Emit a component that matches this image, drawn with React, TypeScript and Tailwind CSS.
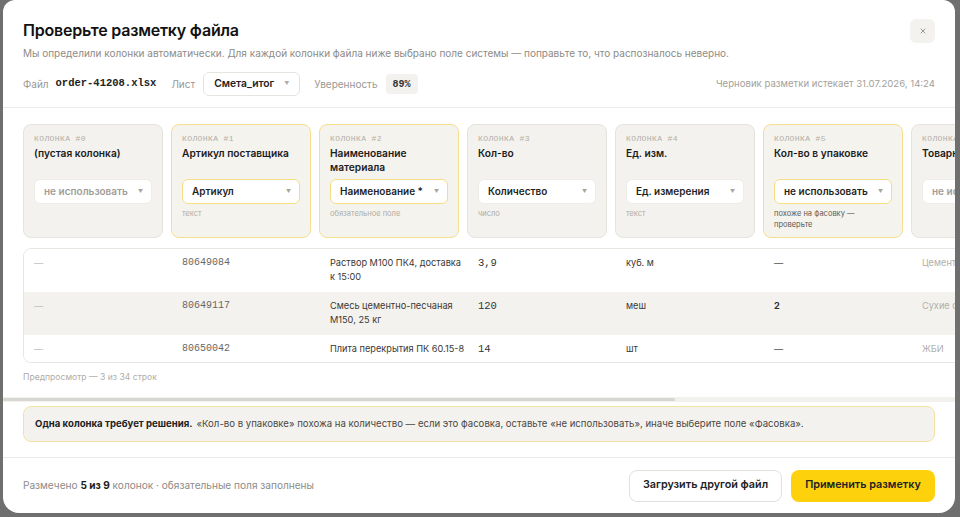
import { X } from 'lucide-react'

interface Column {
  idx: number
  name: string
  field: string
  hint?: string
  flagged?: boolean
  unused?: boolean
  warn?: boolean
}

const columns: Column[] = [
  { idx: 0, name: '(пустая колонка)', field: 'не использовать', unused: true },
  { idx: 1, name: 'Артикул поставщика', field: 'Артикул', hint: 'текст', flagged: true },
  { idx: 2, name: 'Наименование материала', field: 'Наименование *', hint: 'обязательное поле', flagged: true },
  { idx: 3, name: 'Кол-во', field: 'Количество', hint: 'число' },
  { idx: 4, name: 'Ед. изм.', field: 'Ед. измерения', hint: 'текст' },
  { idx: 5, name: 'Кол-во в упаковке', field: 'не использовать', hint: 'похоже на фасовку — проверьте', flagged: true, warn: true },
  { idx: 6, name: 'Товарная группа', field: 'не использовать', unused: true },
  { idx: 7, name: 'Цена', field: 'не использовать', unused: true },
]

const rows = [
  ['—', '80649084', 'Раствор М100 ПК4, доставка к 15:00', '3,9', 'куб. м', '—', 'Цемент и растворы', ''],
  ['—', '80649117', 'Смесь цементно-песчаная М150, 25 кг', '120', 'меш', '2', 'Сухие смеси', ''],
  ['—', '80650042', 'Плита перекрытия ПК 60.15-8', '14', 'шт', '—', 'ЖБИ', ''],
]

const sans = "font-['Inter','Noto_Sans',sans-serif]"
const mono = "font-['Liberation_Mono','DejaVu_Sans_Mono',monospace]"

function ColumnCard({ col }: { col: Column }) {
  return (
    <div
      className={`w-[140px] h-[114px] shrink-0 rounded-lg border px-2.5 pt-[9px] ${
        col.flagged ? 'border-[#f5df8c] bg-[#f5f3ee]' : 'border-[#e6e3dd] bg-[#f4f2ee]'
      }`}
    >
      <div className={`${mono} text-[8px] leading-[10px] tracking-[0.4px] text-[#b3aea6]`}>
        КОЛОНКА #{col.idx}
      </div>
      <div className="mt-[2px] h-[28px] text-[10.2px] leading-[14px] font-semibold text-[#1c1c1c]">
        {col.name}
      </div>
      <div
        className={`mt-[5px] h-[25px] rounded-md bg-white border flex items-center justify-between pl-[9px] pr-[8px] ${
          col.flagged ? 'border-[#f6dd82]' : 'border-[#efede8]'
        }`}
      >
        <span
          className={`text-[10px] font-semibold whitespace-nowrap ${
            col.unused ? 'text-[#a19d97]' : 'text-[#1f1f1f]'
          }`}
        >
          {col.field}
        </span>
        <span className="text-[5px] text-[#a8a49d]">▼</span>
      </div>
      {col.hint && (
        <div
          className={`mt-[4px] text-[7.5px] leading-[11px] ${
            col.warn ? 'text-[#5d5a55] pr-4' : 'text-[#b0aca5]'
          }`}
        >
          {col.hint}
        </div>
      )}
    </div>
  )
}

export default function App() {
  return (
    <div className={`w-[960px] h-[517px] bg-[#6f6f6f] overflow-hidden ${sans}`}>
      <div className="ml-[3px] w-[952px] h-[513px] bg-white rounded-b-2xl rounded-t-xl overflow-hidden flex flex-col">
        {/* Header */}
        <div className="px-5 pt-[19px] h-[108px] border-b border-[#ecebe7] shrink-0">
          <div className="flex items-start justify-between">
            <div>
              <h1 className="text-[16px] leading-[22px] font-semibold text-[#111] tracking-[-0.2px]">
                Проверьте разметку файла
              </h1>
              <p className="mt-[5px] text-[10px] leading-[14px] text-[#8d8b86]">
                Мы определили колонки автоматически. Для каждой колонки файла ниже выбрано поле системы — поправьте то, что распозналось неверно.
              </p>
            </div>
            <button className="w-[25px] h-[24px] rounded-md bg-[#f3f2ee] flex items-center justify-center">
              <X className="w-[8px] h-[8px] text-[#888]" strokeWidth={2.5} />
            </button>
          </div>
          <div className="mt-[12px] flex items-center justify-between">
            <div className="flex items-center text-[10px]">
              <span className="text-[#9a9893]">Файл</span>
              <span className={`${mono} ml-[7px] text-[10.5px] font-bold text-[#222]`}>order-41208.xlsx</span>
              <span className="ml-[15px] text-[#9a9893]">Лист</span>
              <div className="ml-[8px] h-[24px] px-[10px] rounded-md border border-[#e6e4df] flex items-center gap-[10px]">
                <span className="text-[10.3px] font-semibold text-[#222]">Смета_итог</span>
                <span className="text-[5px] text-[#aaa]">▼</span>
              </div>
              <span className="ml-[14px] text-[#9a9893]">Уверенность</span>
              <span className={`${mono} ml-[8px] h-[20px] px-[7px] flex items-center rounded bg-[#f3f2ee] text-[10px] font-bold text-[#333]`}>
                89%
              </span>
            </div>
            <span className="text-[9.6px] text-[#a3a19c]">Черновик разметки истекает 31.07.2026, 14:24</span>
          </div>
        </div>

        {/* Scroll area */}
        <div className="h-[294px] shrink-0 flex flex-col">
          <div className="flex-1 overflow-hidden pl-5 pt-4">
            <div className="flex gap-2">
              {columns.map((c) => (
                <ColumnCard key={c.idx} col={c} />
              ))}
            </div>
            <div className="mt-[10px] w-[1180px] rounded-lg border border-[#e8e6e1] overflow-hidden">
              {rows.map((r, i) => (
                <div
                  key={i}
                  className={`grid grid-cols-[148px_148px_148px_148px_148px_148px_148px_148px] ${
                    i === 1 ? 'bg-[#f4f2ee]' : 'bg-white'
                  } ${i === 2 ? 'h-[27px]' : 'h-[43px]'}`}
                >
                  {r.map((cell, j) => (
                    <div
                      key={j}
                      className={`pl-[10px] pr-0 pt-[7px] text-[9.2px] leading-[14px] ${
                        j === 0
                          ? 'text-[#c4c1bb]'
                          : j === 1
                          ? `${mono} text-[10px] text-[#6a6763]`
                          : j === 3
                          ? `${mono} text-[10.5px] text-[#333]`
                          : j === 5
                          ? cell === '—'
                            ? 'text-[#555]'
                            : 'font-bold text-[#333]'
                          : j === 6
                          ? 'text-[#b2afa9] whitespace-nowrap'
                          : 'text-[#3a3835]'
                      }`}
                    >
                      {cell}
                    </div>
                  ))}
                </div>
              ))}
            </div>
            <div className="mt-[8px] text-[8.6px] text-[#b0ada7]">Предпросмотр — 3 из 34 строк</div>
          </div>
          <div className="h-[5px] bg-[#f2f1ee] flex items-center">
            <div className="w-[672px] h-[3px] rounded-full bg-[#d8d6d1]" />
          </div>
        </div>

        {/* Warning */}
        <div className="px-5 pt-[4px] pb-[15px] border-b border-[#ecebe7] shrink-0">
          <div className="h-[36px] rounded-lg border border-[#f4e2a0] bg-[#f4f2ee] px-[11px] flex items-center text-[9.6px] text-[#4a4844]">
            <span className="font-bold text-[#222]">Одна колонка требует решения.</span>
            <span className="ml-[4px]">
              «Кол-во в упаковке» похожа на количество — если это фасовка, оставьте «не использовать», иначе выберите поле «Фасовка».
            </span>
          </div>
        </div>

        {/* Footer */}
        <div className="flex-1 px-5 flex items-center justify-between">
          <div className="text-[10.1px] text-[#8d8b86]">
            Размечено <span className="font-bold text-[#1c1c1c]">5 из 9</span> колонок · обязательные поля заполнены
          </div>
          <div className="flex items-center gap-[9px]">
            <button className="h-[32px] w-[153px] rounded-lg border border-[#e3e1dc] bg-white text-[10.8px] font-semibold text-[#222]">
              Загрузить другой файл
            </button>
            <button className="h-[32px] w-[144px] rounded-lg bg-[#fdd20c] text-[10.8px] font-semibold text-[#222]">
              Применить разметку
            </button>
          </div>
        </div>
      </div>
    </div>
  )
}
